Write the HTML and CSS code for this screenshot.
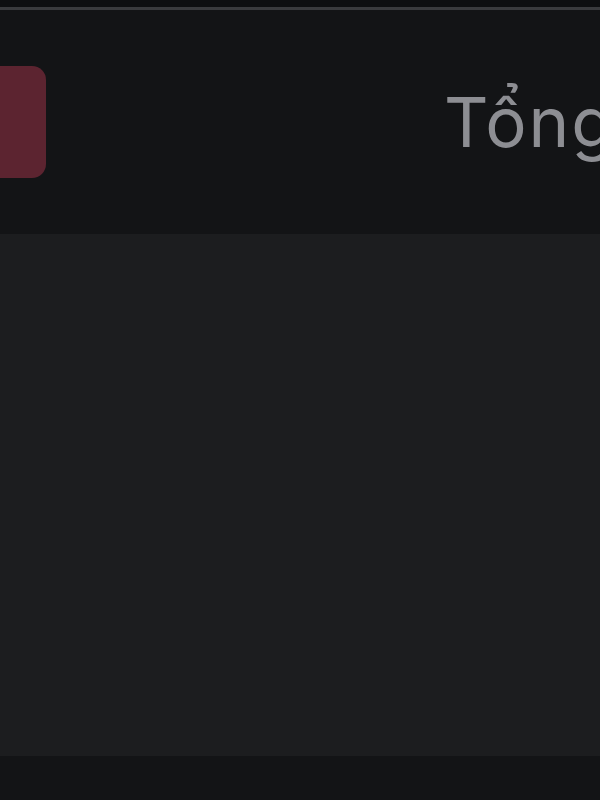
FILE: index.html
```html
<!DOCTYPE html>
<html lang="vi">
<head>
    <meta charset="UTF-8">
    <meta name="viewport" content="width=device-width, initial-scale=1.0">
    <title>Tổng</title>
    <link rel="stylesheet" href="styles.css">
</head>
<body>
    <div class="status-strip"></div>
    <div class="top-line"></div>

    <header class="header">
        <div class="badge"></div>
        <h1 class="title">Tổng</h1>
    </header>

    <main class="panel"></main>

    <footer class="footer"></footer>
</body>
</html>
```

FILE: styles.css
```css
body {
    margin: 0;
    height: 800px;
    overflow: hidden;
    background-color: #131416;
    font-family: Inter, Roboto, "Liberation Sans", sans-serif;
    display: flex;
    flex-direction: column;
}

.status-strip {
    height: 7px;
    background-color: #0e0f11;
}

.top-line {
    height: 3px;
    background-color: #3a3b3e;
}

.header {
    height: 224px;
    display: flex;
    align-items: flex-start;
    padding-top: 56px;
    box-sizing: border-box;
    overflow: hidden;
    white-space: nowrap;
}

.badge {
    flex: none;
    width: 106px;
    height: 112px;
    margin-left: -60px;
    border-radius: 14px;
    background-color: #5c2430;
}

.title {
    margin: 22px 0 0 398px;
    font-size: 69px;
    line-height: 1;
    font-weight: 400;
    letter-spacing: 2px;
    color: #8d8e93;
}

.panel {
    flex: none;
    height: 522px;
    background-color: #1c1d1f;
}

.footer {
    flex: 1;
    background-color: #131416;
}
```
